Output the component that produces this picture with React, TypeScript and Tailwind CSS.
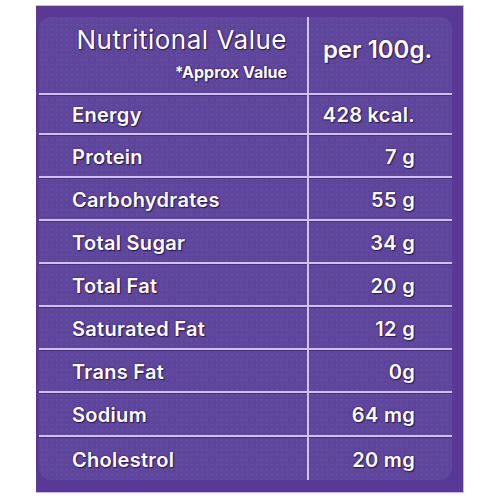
import React from "react";

const rows: { label: string; value: string; h: string }[] = [
  { label: "Energy", value: "428 kcal.", h: "h-[40px]" },
  { label: "Protein", value: "7 g", h: "h-[43px]" },
  { label: "Carbohydrates", value: "55 g", h: "h-[43px]" },
  { label: "Total Sugar", value: "34 g", h: "h-[43px]" },
  { label: "Total Fat", value: "20 g", h: "h-[43px]" },
  { label: "Saturated Fat", value: "12 g", h: "h-[43px]" },
  { label: "Trans Fat", value: "0g", h: "h-[43px]" },
  { label: "Sodium", value: "64 mg", h: "h-[44px]" },
  { label: "Cholestrol", value: "20 mg", h: "h-[43px]" },
];

const shadow = "[text-shadow:1px_1px_1px_#2c1660,0_0_2px_#2c1660]";

const App: React.FC = () => {
  return (
    <div className="w-[500px] h-[500px] bg-white pt-[5px] pl-[36px] font-['Inter','Liberation_Sans',sans-serif]">
      <div className="w-[428px] h-[488px] bg-[#5a3996] border-t border-r border-b border-[#c7b6ea] pt-[11px] pl-[3px]">
        <div className="w-[413px] h-[463px] rounded-[12px] bg-[#5f469d] bg-[radial-gradient(circle,rgba(255,255,255,0.04)_1px,transparent_1px)] bg-[length:5px_5px] overflow-hidden text-white">
          {/* header */}
          <div className="grid grid-cols-[268px_145px] h-[78px] border-b-2 border-[#cfc2ec] shadow-[0_1px_0_#4a2e86]">
            <div className="flex flex-col items-end pr-[20px] pt-[6px]">
              <div className={`text-[26px] leading-[34px] font-normal tracking-[0.5px] ${shadow}`}>
                Nutritional Value
              </div>
              <div className={`text-[16px] leading-[20px] font-bold mt-[5px] ${shadow}`}>
                *Approx Value
              </div>
            </div>
            <div className="border-l-2 border-[#cfc2ec] flex justify-center pt-[18px] pr-[6px]">
              <div className={`text-[24px] leading-[30px] font-semibold ${shadow}`}>per 100g.</div>
            </div>
          </div>
          {rows.map((r, i) => (
            <div
              key={r.label}
              className={`grid grid-cols-[268px_145px] ${r.h} ${
                i < rows.length - 1 ? "border-b-2 border-[#cfc2ec] shadow-[0_1px_0_#4a2e86]" : ""
              }`}
            >
              <div className={`flex items-center pl-[33px] pt-[2px] text-[20px] font-semibold tracking-[0.3px] ${shadow}`}>
                {r.label}
              </div>
              <div
                className={`border-l-2 border-[#cfc2ec] flex items-center justify-end pr-[37px] pt-[2px] text-[20px] font-semibold tracking-[0.3px] ${shadow}`}
              >
                {r.value}
              </div>
            </div>
          ))}
        </div>
      </div>
    </div>
  );
};

export default App;
